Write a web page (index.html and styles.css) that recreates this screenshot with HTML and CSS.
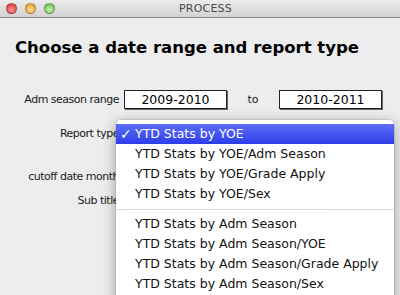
FILE: index.html
```html
<!DOCTYPE html>
<html>
<head>
<meta charset="utf-8">
<link rel="stylesheet" href="styles.css">
</head>
<body>
<div class="window">
  <div class="titlebar">
    <div class="lights">
      <span class="light red"></span>
      <span class="light yellow"></span>
      <span class="light green"></span>
    </div>
    <div class="title">PROCESS</div>
  </div>
  <div class="content">
    <h1 class="heading">Choose a date range and report type</h1>
    <div class="form">
      <div class="row r1">
        <span class="label">Adm season range</span>
        <div class="field">2009-2010</div>
        <span class="to">to</span>
        <div class="field">2010-2011</div>
      </div>
      <div class="row r2">
        <span class="label">Report type</span>
      </div>
      <div class="row r3">
        <span class="label">cutoff date month</span>
        <div class="ghost g1"></div>
        <div class="ghost g2"></div>
      </div>
      <div class="row r4">
        <span class="label">Sub title</span>
        <div class="ghost g3"></div>
      </div>
    </div>
    <div class="menu">
      <div class="item selected"><span class="check">✓</span>YTD Stats by YOE</div>
      <div class="item">YTD Stats by YOE/Adm Season</div>
      <div class="item">YTD Stats by YOE/Grade Apply</div>
      <div class="item">YTD Stats by YOE/Sex</div>
      <div class="sep"></div>
      <div class="item">YTD Stats by Adm Season</div>
      <div class="item">YTD Stats by Adm Season/YOE</div>
      <div class="item">YTD Stats by Adm Season/Grade Apply</div>
      <div class="item">YTD Stats by Adm Season/Sex</div>
    </div>
  </div>
</div>
</body>
</html>
```
FILE: styles.css
```css
html, body {
  margin: 0;
  padding: 0;
  width: 400px;
  height: 295px;
  overflow: hidden;
  background: #ededed;
  font-family: "DejaVu Sans", Verdana, sans-serif;
}
.window {
  width: 400px;
  height: 295px;
  overflow: hidden;
  background: #ededed;
}
.titlebar {
  height: 17px;
  border-bottom: 1px solid #8a8a8a;
  background: linear-gradient(#ebebeb, #d3d3d3);
  display: flex;
  align-items: center;
}
.lights {
  display: flex;
  gap: 8px;
  padding-left: 6px;
}
.light {
  width: 11px;
  height: 11px;
  border-radius: 50%;
  box-sizing: border-box;
  border: 1px solid rgba(0,0,0,0.25);
}
.red { background: radial-gradient(circle at 50% 65%, #ff9a9a, #e24a4a 70%, #b83232); }
.yellow { background: radial-gradient(circle at 50% 65%, #ffe0a0, #f0a83a 70%, #c8862a); }
.green { background: radial-gradient(circle at 50% 65%, #c8f0b0, #7cc864 70%, #58a044); }
.title {
  flex: 1;
  text-align: center;
  font-size: 11px;
  color: #4a4a4a;
  padding-right: 44px;
  letter-spacing: 0.2px;
}
.content {
  position: relative;
  padding-top: 20px;
}
.heading {
  margin: 0 0 0 15px;
  font-size: 16.5px;
  line-height: 20px;
  font-weight: bold;
  color: #000;
}
.form {
  margin-top: 32px;
  display: flex;
  flex-direction: column;
}
.row {
  display: flex;
  align-items: center;
  height: 20px;
}
.r1 { height: 19px; }
.r2 { margin-top: 14px; }
.r3 { margin-top: 23px; }
.r4 { margin-top: 4px; }
.label {
  width: 119px;
  text-align: right;
  font-size: 11px;
  letter-spacing: -0.5px;
  color: #1a1a1a;
  white-space: nowrap;
  flex: none;
}
.field {
  box-sizing: border-box;
  height: 19px;
  width: 103px;
  margin-left: 5px;
  border: 1px solid #222;
  box-shadow: 1px 1px 0 #666;
  background: #fff;
  font-size: 12.5px;
  line-height: 17px;
  text-align: center;
  color: #000;
}
.to {
  width: 52px;
  text-align: center;
  font-size: 11px;
  color: #1a1a1a;
}
.to + .field { margin-left: 0; }
.ghost {
  height: 18px;
  border: 1px solid #bbb;
  box-sizing: border-box;
  background: #fff;
}
.g1 { width: 34px; margin-left: 8px; }
.g2 { width: 38px; margin-left: 4px; }
.g3 { width: 200px; margin-left: 9px; }
.menu {
  position: absolute;
  left: 116px;
  top: 102px;
  width: 278px;
  height: 190px;
  padding-top: 4px;
  background: rgba(255,255,255,0.97);
  border-radius: 5px 5px 0 0;
  box-shadow: 0 3px 14px rgba(0,0,0,0.35), 0 0 0 1px rgba(0,0,0,0.08);
  font-size: 12.5px;
  color: #111;
}
.item {
  height: 20px;
  line-height: 20px;
  padding-left: 19px;
  position: relative;
  white-space: nowrap;
}
.selected {
  background: linear-gradient(#5d6ef7, #2c3de9);
  color: #fff;
}
.check {
  position: absolute;
  left: 4px;
  top: 0;
  font-size: 14px;
  font-weight: bold;
}
.sep {
  height: 10px;
  position: relative;
}
.sep::after {
  content: "";
  position: absolute;
  left: 0;
  right: 0;
  top: 5px;
  height: 1px;
  background: #dcdcdc;
}
```
